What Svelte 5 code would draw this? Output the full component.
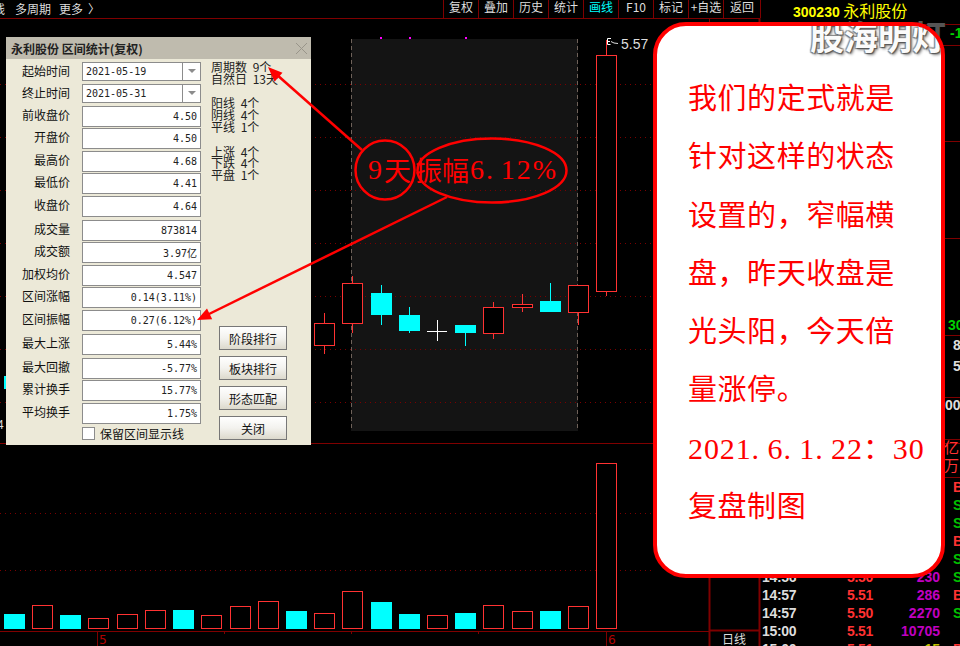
<script>
	const tools = ["复权", "叠加", "历史", "统计", "画线", "F10", "标记", "+自选", "返回"];

	// [x, bodyTop, bodyBottom, wickTop, wickBottom, up]
	const candles = [
		[314, 323, 345, 313, 354, true],
		[342, 283, 323, 276, 333, true],
		[371, 293, 315, 285, 325, false],
		[399, 315, 331, 307, 333, false],
		[455, 325, 333, 325, 346, false],
		[483, 307, 333, 302, 339, true],
		[512, 304, 307, 294, 312, true],
		[540, 301, 312, 283, 312, false],
		[568, 285, 312, 285, 325, true],
		[596, 55, 291, 40, 296, true]
	];

	// [x, top, up]
	const volumes = [
		[4, 614, false], [32, 605, true], [60, 615, false], [88, 618, true],
		[117, 614, true], [145, 610, true], [173, 610, false], [201, 615, true],
		[230, 606, true], [258, 601, true], [286, 611, false], [314, 613, true],
		[342, 591, true], [371, 602, false], [399, 614, false], [427, 615, true],
		[455, 613, false], [483, 605, true], [512, 611, true], [540, 611, false],
		[568, 606, true], [596, 463, true]
	];

	const priceGrid = [84, 137, 190, 243, 296, 349, 402];
	const sideLines = [24, 45, 141, 238, 335, 397, 439, 477];

	const fields = [
		{ label: "起始时间", value: "2021-05-19", combo: true, h: 22 },
		{ label: "终止时间", value: "2021-05-31", combo: true, h: 22 },
		{ label: "前收盘价", value: "4.50", h: 22 },
		{ label: "开盘价", value: "4.50", h: 23 },
		{ label: "最高价", value: "4.68", h: 22 },
		{ label: "最低价", value: "4.41", h: 23 },
		{ label: "收盘价", value: "4.64", h: 24 },
		{ label: "成交量", value: "873814", h: 22 },
		{ label: "成交额", value: "3.97亿", h: 23 },
		{ label: "加权均价", value: "4.547", h: 22 },
		{ label: "区间涨幅", value: "0.14(3.11%)", h: 23 },
		{ label: "区间振幅", value: "0.27(6.12%)", h: 24 },
		{ label: "最大上涨", value: "5.44%", h: 24 },
		{ label: "最大回撤", value: "-5.77%", h: 22 },
		{ label: "累计换手", value: "15.77%", h: 23 },
		{ label: "平均换手", value: "1.75%", h: 22 }
	];

	const stats = [
		["周期数 9个", "自然日 13天"],
		["阳线 4个", "阴线 4个", "平线 1个"],
		["上涨 4个", "下跌 4个", "平盘 1个"]
	];

	const actions = ["阶段排行", "板块排行", "形态匹配", "关闭"];

	const ticks = [
		{ t: "", p: "", v: "", f: "B" },
		{ t: "", p: "", v: "", f: "S" },
		{ t: "", p: "", v: "", f: "S" },
		{ t: "", p: "", v: "", f: "B" },
		{ t: "", p: "", v: "", f: "S" },
		{ t: "14:56", p: "5.50", v: "230", f: "S" },
		{ t: "14:57", p: "5.51", v: "286", f: "B" },
		{ t: "14:57", p: "5.50", v: "2270", f: "S" },
		{ t: "15:00", p: "5.51", v: "10705", f: "" },
		{ t: "15:00", p: "5.51", v: "15", f: "B", last: true }
	];

	const note = ["我们的定式就是", "针对这样的状态", "设置的，窄幅横", "盘，昨天收盘是", "光头阳，今天倍", "量涨停。"];
</script>

<div class="screen">
	<svg class="chart" width="960" height="646" viewBox="0 0 960 646">
		<rect x="351" y="39" width="227" height="392" fill="#141414" />
		{#each priceGrid as y}
			<line x1="0" x2="654" y1={y + 0.5} y2={y + 0.5} class="dots" />
		{/each}
		<line x1="0" x2="654" y1="513.5" y2="513.5" class="dots" />
		<line x1="0" x2="654" y1="570.5" y2="570.5" class="dots" />
		<line x1="0" x2="960" y1="443.5" y2="443.5" class="rule" />
		<line x1="0" x2="709" y1="631.5" y2="631.5" class="rule" />
		<line x1="351.5" x2="351.5" y1="39" y2="431" class="range" />
		<line x1="577.5" x2="577.5" y1="39" y2="431" class="range" />

		{#each [380, 409, 465] as x}
			<rect {x} y="37" width="2" height="2" fill="#f0f" />
		{/each}

		{#each candles as [x, top, bottom, wickTop, wickBottom, up]}
			<line x1={x + 10.5} x2={x + 10.5} y1={wickTop} y2={wickBottom} stroke={up ? "#ff3232" : "#0ff"} />
			{#if up}
				<rect x={x + 0.5} y={top + 0.5} width="20" height={bottom - top} fill="#000" stroke="#ff3232" />
			{:else}
				<rect {x} y={top} width="21" height={bottom - top} fill="#0ff" />
			{/if}
		{/each}
		<line x1="427" x2="447" y1="331.5" y2="331.5" stroke="#fff" />
		<line x1="437.5" x2="437.5" y1="320" y2="341" stroke="#fff" />

		<path d="M611 38.5H607.5V44.5H610.5M607.5 41.5H610" fill="none" stroke="#fff" />
		<path d="M611 41.5 614 43 618 43.5" fill="none" stroke="#ddd" />
		<text x="621" y="49" class="peak">5.57</text>

		{#each volumes as [x, top, up]}
			{#if up}
				<rect x={x + 0.5} y={top + 0.5} width="20" height={629 - top - 1} fill="#000" stroke="#ff3232" />
			{:else}
				<rect {x} y={top} width="21" height={629 - top} fill="#0ff" />
			{/if}
		{/each}

		{#each [224, 351, 478] as x}
			<line x1={x + 0.5} x2={x + 0.5} y1="632" y2="634" class="rule" />
		{/each}
		<line x1="97.5" x2="97.5" y1="632" y2="646" class="rule" />
		<line x1="606.5" x2="606.5" y1="632" y2="646" class="rule" />
		<text x="99" y="644" class="day">5</text>
		<text x="608" y="644" class="day">6</text>

		<rect x="4" y="376" width="3" height="13" fill="#0ff" />
		<text x="-3" y="429" class="edge">4</text>

		<line x1="709.5" x2="709.5" y1="18" y2="22" class="rule" />
		<line x1="709.5" x2="709.5" y1="440" y2="646" class="rule thick" />
		<line x1="709" x2="759" y1="630.5" y2="630.5" class="rule thick" />
		<line x1="759.5" x2="759.5" y1="18" y2="646" class="rule thick" />
		{#each sideLines as y}
			<line x1="759" x2="960" y1={y + 0.5} y2={y + 0.5} class="rule" />
		{/each}
		<text x="950" y="38" class="side green">-1</text>
		<text x="948" y="330" class="side green">30</text>
		<text x="953" y="350" class="side">8</text>
		<text x="953" y="371" class="side">5</text>
		<text x="945" y="410" class="side">00</text>
	</svg>

	<header class="topbar">
		<div class="menu">
			<span class="cut">线</span>
			<span>多周期</span>
			<span>更多</span>
			<span class="chev">〉</span>
		</div>
		<div class="tools">
			{#each tools as tool}
				<span class="tool" class:active={tool === "画线"}>{tool}</span>
			{/each}
		</div>
		<div class="stock"><b>300230</b> 永利股份</div>
	</header>

	<section class="ticks">
		<div class="unit">亿</div>
		<div class="unit">万</div>
		<div class="tick-list">
			{#each ticks as row}
				<div class="tick">
					<span class="time">{row.t}</span>
					<span class="price">{row.p}</span>
					<span class="vol" class:small={row.last}>{row.v}</span>
					<span class="flag" class:buy={row.f === "B"}>{row.f}</span>
				</div>
			{/each}
		</div>
		<div class="period">日线</div>
	</section>

	<section class="dialog">
		<div class="title">
			<span>永利股份 区间统计(复权)</span>
			<svg width="13" height="13" viewBox="0 0 13 13"><path d="M1 1 12 12M12 1 1 12" stroke="#99958a" fill="none" /></svg>
		</div>
		<div class="body">
			<div class="fields">
				{#each fields as f}
					<div class="field" style={`height: ${f.h}px`}>
						<span class="label">{f.label}</span>
						<div class="input" class:combo={f.combo}>
							<span class="value">{f.value}</span>
							{#if f.combo}<i class="drop"></i>{/if}
						</div>
					</div>
				{/each}
				<label class="keep">
					<i class="check"></i>
					<span>保留区间显示线</span>
				</label>
			</div>
			<div class="aside">
				<div class="stats">
					{#each stats as group}
						<div class="group">
							{#each group as line}
								<div>{line}</div>
							{/each}
						</div>
					{/each}
				</div>
				<div class="actions">
					{#each actions as a}
						<button>{a}</button>
					{/each}
				</div>
			</div>
		</div>
	</section>

	<svg class="marks" width="960" height="646" viewBox="0 0 960 646">
		<ellipse cx="385" cy="170" rx="29.5" ry="29.5" />
		<ellipse cx="492" cy="170.5" rx="74.5" ry="32" />
		<line x1="362" y1="150" x2="276" y2="74" />
		<polygon points="268,67 282.5,72.8 274.5,81.8" />
		<line x1="447" y1="197" x2="205" y2="316" />
		<polygon points="197,320 212.2,319.2 207,308.4" />
	</svg>
	<div class="callout">
		<span class="num">9</span><span class="cjk">天</span><span class="cjk gap">振幅</span><span class="num">6<i class="dot">.</i>12%</span>
	</div>

	<div class="mark">股海明灯</div>

	<aside class="bubble">
		{#each note as line}
			<p>{line}</p>
		{/each}
		<p class="num stamp">2021<i class="dot">.</i>6<i class="dot">.</i>1<i class="dot">.</i>22<span class="cjk">：</span>30</p>
		<p>复盘制图</p>
		<div class="mark inner" aria-hidden="true">股海明灯</div>
	</aside>
</div>

<style>
	:global(body) {
		background: #000;
	}
	.screen {
		position: relative;
		width: 960px;
		height: 646px;
		overflow: hidden;
		background: #000;
		font-family: "Noto Sans CJK SC", "Noto Sans", sans-serif;
		font-size: 12px;
		color: #ddd;
	}
	.chart {
		position: absolute;
		inset: 0;
	}
	.dots {
		stroke: #7a0000;
		stroke-dasharray: 1 4;
	}
	.rule {
		stroke: #7f0000;
	}
	.thick {
		stroke-width: 2;
	}
	.range {
		stroke: #6f625a;
		stroke-dasharray: 4 3;
	}
	.peak {
		font: 14px "Liberation Sans", sans-serif;
		fill: #ddd;
	}
	.day {
		font: 13px "DejaVu Sans Mono", monospace;
		fill: #b00000;
	}
	.edge {
		font: 12px "Liberation Sans", sans-serif;
		fill: #ddd;
	}
	.side {
		font: bold 14px "Liberation Sans", sans-serif;
		fill: #ddd;
	}
	.green {
		fill: #00d000;
	}

	.topbar {
		position: relative;
		display: flex;
		align-items: center;
		height: 18px;
		border-bottom: 1px solid #7f0000;
		width: 760px;
		line-height: 15px;
	}
	.menu {
		display: flex;
		gap: 8px;
		width: 443px;
		margin-left: -7px;
		margin-top: -2px;
		flex: none;
	}
	.cut {
		margin-right: 2px;
	}
	.chev {
		margin-left: -3px;
	}
	.tools {
		display: flex;
		margin-left: 7px;
		flex: none;
		height: 18px;
	}
	.tool {
		width: 34px;
		height: 18px;
		line-height: 14px;
		text-align: center;
		border-left: 1px solid #7f0000;
	}
	.tool:last-child {
		width: 36px;
		border-right: 1px solid #7f0000;
	}
	.active {
		color: #0ff;
	}
	.stock {
		flex: none;
		margin-left: 32px;
		margin-top: 2px;
		color: #ff0;
		font-size: 16px;
		white-space: nowrap;
		line-height: 18px;
	}
	.stock b {
		font: bold 14px "Liberation Sans", sans-serif;
	}

	.ticks {
		position: absolute;
		left: 759px;
		top: 438px;
		width: 201px;
		height: 208px;
	}
	.unit {
		position: absolute;
		left: 185px;
		color: #ff3232;
		font-size: 15px;
		line-height: 18px;
	}
	.unit:nth-child(1) {
		top: 0;
	}
	.unit:nth-child(2) {
		top: 18px;
	}
	.tick-list {
		position: absolute;
		left: 3px;
		top: 40px;
		display: flex;
		flex-direction: column;
	}
	.tick {
		display: grid;
		grid-template-columns: 85px 25px 68px auto;
		height: 18px;
		font: bold 14px/18px "Liberation Sans", sans-serif;
	}
	.time {
		color: #ddd;
		letter-spacing: -0.3px;
	}
	.price {
		color: #ff3232;
		letter-spacing: -0.3px;
	}
	.vol {
		color: #c000c0;
		text-align: right;
	}
	.vol.small {
		color: #c0c000;
	}
	.flag {
		margin-left: 13px;
		color: #00c000;
	}
	.flag.buy {
		color: #ff3232;
	}
	.period {
		position: absolute;
		left: -37px;
		top: 193px;
		color: #ddd;
		line-height: 15px;
	}

	.dialog {
		position: absolute;
		left: 6px;
		top: 37px;
		width: 305px;
		height: 408px;
		box-sizing: border-box;
		background: #ece9d8;
		color: #111;
		display: flex;
		flex-direction: column;
	}
	.title {
		flex: none;
		height: 22px;
		padding: 0 3px 0 5px;
		background: #bfbbae;
		display: flex;
		align-items: center;
		justify-content: space-between;
		font-weight: 700;
		color: #222;
	}
	.body {
		flex: 1;
		display: flex;
		padding-top: 3px;
	}
	.fields {
		width: 195px;
		flex: none;
		display: flex;
		flex-direction: column;
	}
	.field {
		display: flex;
		flex: none;
	}
	.label {
		width: 64px;
		margin-right: 12px;
		text-align: right;
		line-height: 17px;
		flex: none;
	}
	.input {
		position: relative;
		box-sizing: border-box;
		width: 119px;
		height: 21px;
		background: #fff;
		border: 1px solid #8c8c8c;
		display: flex;
		justify-content: flex-end;
		align-items: center;
		padding-right: 3px;
		font: 10px "DejaVu Sans Mono", "Noto Sans CJK SC", monospace;
		color: #222;
	}
	.combo {
		justify-content: flex-start;
		padding-left: 3px;
		height: 19px;
	}
	.drop {
		position: absolute;
		right: 0;
		top: 0;
		bottom: 0;
		width: 17px;
		border-left: 1px solid #8c8c8c;
	}
	.drop::after {
		content: "";
		position: absolute;
		left: 5px;
		top: 6px;
		border: 4px solid transparent;
		border-top: 4px solid #8c8c8c;
	}
	.keep {
		display: flex;
		align-items: center;
		gap: 5px;
		margin: 0 0 0 76px;
	}
	.check {
		width: 11px;
		height: 11px;
		background: #fff;
		border: 1px solid #8c8c8c;
	}
	.aside {
		flex: 1;
		display: flex;
		flex-direction: column;
		margin-top: -1px;
		padding: 0 0 5px 10px;
	}
	.stats {
		display: flex;
		flex-direction: column;
		gap: 13px;
		line-height: 11.7px;
		color: #222;
		word-spacing: 3px;
	}
	.actions {
		margin-top: auto;
		display: flex;
		flex-direction: column;
		gap: 6px;
		margin-left: 8px;
	}
	button {
		width: 68px;
		height: 24px;
		padding: 0;
		font: inherit;
		color: #111;
		border: 1px solid #777;
		background: linear-gradient(#fff 0, #f3f2ee 50%, #dcd9cc 100%);
	}

	.marks {
		position: absolute;
		inset: 0;
		pointer-events: none;
	}
	.marks ellipse {
		fill: none;
		stroke: #f00;
		stroke-width: 2.5;
	}
	.marks line {
		stroke: #f00;
		stroke-width: 2.5;
	}
	.marks polygon {
		fill: #f00;
	}
	.callout {
		position: absolute;
		left: 368px;
		top: 153px;
		color: #f00;
		font-size: 27px;
		line-height: 34px;
		white-space: nowrap;
		display: flex;
	}
	.callout .num {
		font-size: 28px;
		letter-spacing: 2px;
	}
	.callout .gap {
		margin: 0 1px 0 4px;
	}
	.num {
		font-family: "Liberation Serif", serif;
	}
	.cjk {
		font-family: "Noto Sans CJK SC", sans-serif;
	}
	.dot {
		display: inline-block;
		width: 0.53em;
		font-style: normal;
	}

	.bubble {
		position: absolute;
		left: 653px;
		top: 22px;
		width: 292px;
		height: 556px;
		box-sizing: border-box;
		background: #fff;
		border: 4px solid #f00;
		border-radius: 33px;
		padding: 41px 0 0 31px;
		color: #f00;
		font-size: 29px;
		letter-spacing: 0.55px;
		overflow: hidden;
	}
	.bubble p {
		margin: 0;
		height: 58.3px;
		line-height: 58px;
		white-space: nowrap;
	}
	.stamp {
		font-size: 30px;
		letter-spacing: 0.9px;
	}
	.stamp .cjk {
		font-size: 29px;
	}

	/* watermark: dim on the black chart, white with a soft shadow on the note */
	.mark {
		position: absolute;
		left: 810px;
		top: 12px;
		font-size: 34px;
		font-weight: 700;
		line-height: 48px;
		letter-spacing: 0;
		color: #555;
		white-space: nowrap;
	}
	.mark.inner {
		left: 153px;
		top: -14px;
		color: #fbfbfb;
		text-shadow: 1px 1px 1px #555, -1px 1px 1px #888, 1px -1px 1px #888, -1px -1px 1px #999, 2px 2px 3px #888;
	}
</style>
